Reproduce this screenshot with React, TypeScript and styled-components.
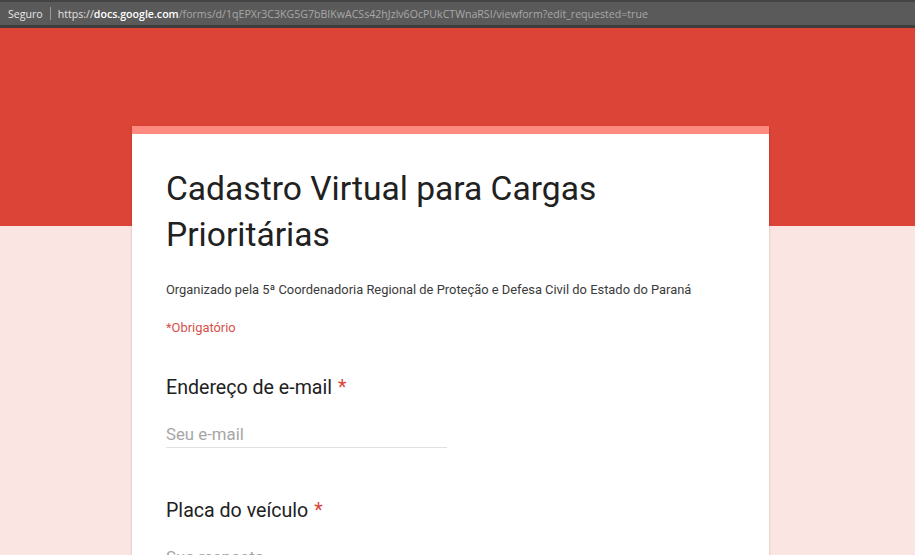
import React from "react";
import styled, { createGlobalStyle } from "styled-components";

const GlobalStyle = createGlobalStyle`
  html, body {
    margin: 0;
    padding: 0;
    height: 100%;
    overflow: hidden;
  }
  body {
    font-family: Roboto, "Liberation Sans", Arial, sans-serif;
    background: #fae5e2;
  }
`;

const Browser = styled.div`
  width: 915px;
  height: 555px;
  display: flex;
  flex-direction: column;
  overflow: hidden;
`;

const AddressBar = styled.div`
  height: 23px;
  display: flex;
  align-items: center;
  gap: 7px;
  padding: 0 8px;
  background: #5a5a5a;
  border-top: 2px solid #444444;
  border-bottom: 3px solid #3e3e3e;
  font-family: "Open Sans", "DejaVu Sans", sans-serif;
  font-size: 10.6px;
  white-space: nowrap;
  flex-shrink: 0;
`;

const Secure = styled.span`
  color: #e6e6e6;
`;

const Divider = styled.span`
  width: 1px;
  height: 13px;
  background: #9a9a9a;
`;

const Url = styled.span`
  color: #a8a8a8;
`;

const Host = styled.span<{ $bright?: boolean }>`
  color: ${(p) => (p.$bright ? "#ffffff" : "#e0e0e0")};
  font-weight: ${(p) => (p.$bright ? 600 : 400)};
`;

const Page = styled.div`
  flex: 1;
  background: linear-gradient(to bottom, #db4437 0, #db4437 198px, #fae5e2 198px);
  padding: 98px 0 0 132px;
`;

const Card = styled.div`
  width: 637px;
  background: #ffffff;
  border-top: 8px solid #ff8a80;
  box-shadow: 0 2px 1px -1px rgba(0, 0, 0, 0.2), 0 1px 1px 0 rgba(0, 0, 0, 0.14),
    0 1px 3px 0 rgba(0, 0, 0, 0.12);
  padding: 32px 34px 40px;
  box-sizing: border-box;
`;

const Title = styled.h1`
  margin: 0;
  font-size: 33.6px;
  line-height: 46px;
  font-weight: 400;
  color: #212121;
`;

const Description = styled.p`
  margin: 22px 0 0;
  font-size: 12.9px;
  line-height: 20px;
  color: #3a3a3a;
`;

const Required = styled.p`
  margin: 18px 0 0;
  font-size: 12.9px;
  line-height: 20px;
  color: #d5514a;
`;

const Question = styled.div`
  margin-top: 38px;
  & + & {
    margin-top: 51px;
  }
`;

const Label = styled.div`
  font-size: 19.6px;
  line-height: 24px;
  color: #212121;
`;

const Star = styled.span`
  color: #db4437;
  margin-left: 6px;
`;

const Field = styled.div`
  width: 281px;
  margin-top: 24px;
  padding-bottom: 3px;
  border-bottom: 1px solid #e0e0e0;
  font-size: 16.8px;
  line-height: 20px;
  color: #a6a6a6;
`;

const questions = ["Endereço de e-mail", "Placa do veículo"];
const placeholders = ["Seu e-mail", "Sua resposta"];

export default function App() {
  return (
    <Browser>
      <GlobalStyle />
      <AddressBar>
        <Secure>Seguro</Secure>
        <Divider />
        <Url>
          <Host>https://</Host>
          <Host $bright>docs.google.com</Host>
          /forms/d/1qEPXr3C3KG5G7bBIKwACSs42hJzlv6OcPUkCTWnaRSI/viewform?edit_requested=true
        </Url>
      </AddressBar>
      <Page>
        <Card>
          <Title>Cadastro Virtual para Cargas Prioritárias</Title>
          <Description>
            Organizado pela 5ª Coordenadoria Regional de Proteção e Defesa Civil do Estado do Paraná
          </Description>
          <Required>*Obrigatório</Required>
          {questions.map((q, i) => (
            <Question key={q}>
              <Label>
                {q}
                <Star>*</Star>
              </Label>
              <Field>{placeholders[i]}</Field>
            </Question>
          ))}
        </Card>
      </Page>
    </Browser>
  );
}
